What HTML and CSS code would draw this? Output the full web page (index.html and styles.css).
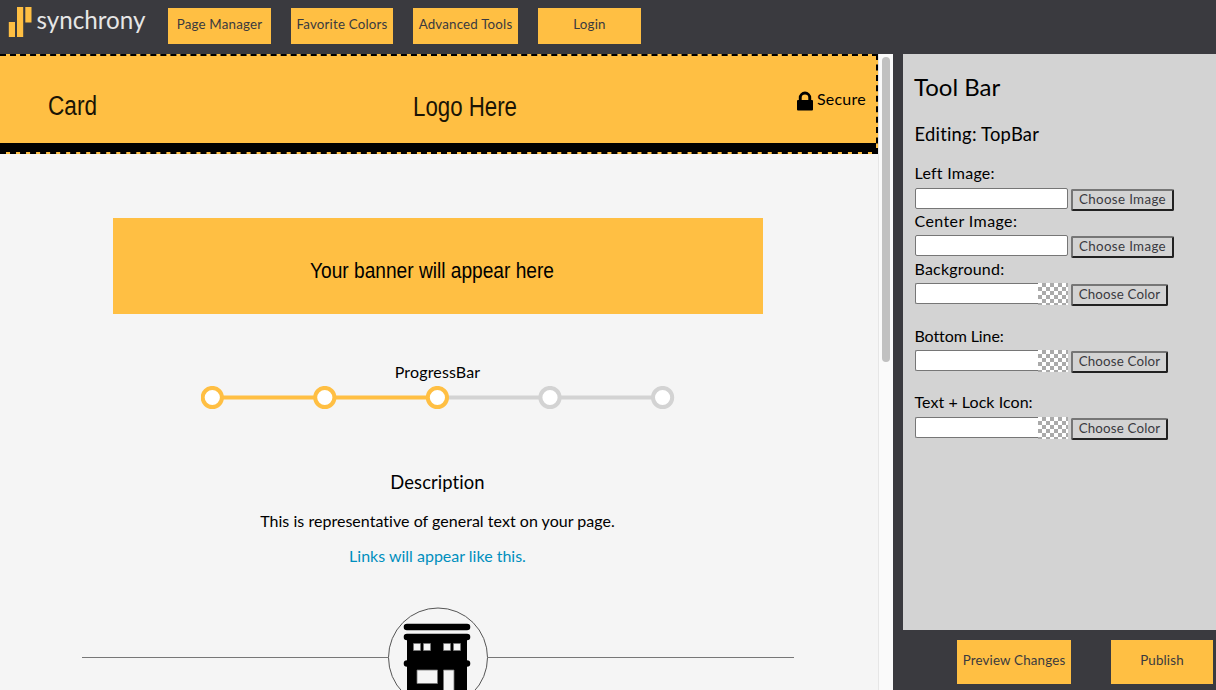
FILE: index.html
```html
<!DOCTYPE html>
<html lang="en">
<head>
<meta charset="utf-8">
<title>Synchrony Page Manager</title>
<link rel="stylesheet" href="styles.css">
</head>
<body>
<header class="site-header">
  <svg class="brand" width="168" height="54" viewBox="0 0 168 54">
    <g fill="#ffbf43"><rect x="8.8" y="22" width="6.2" height="15"/><rect x="17" y="7" width="6.2" height="30"/><rect x="25.3" y="7" width="6.2" height="15.5"/></g>
    <text class="brand-name" x="36.500" y="28.5" textLength="109" lengthAdjust="spacingAndGlyphs">synchrony</text>
  </svg>
  <nav class="nav">
    <button class="btn w103"><span>Page Manager</span></button>
    <button class="btn w102"><span>Favorite Colors</span></button>
    <button class="btn w105"><span>Advanced Tools</span></button>
    <button class="btn w103"><span>Login</span></button>
  </nav>
</header>
<div class="workspace">
  <main class="preview">
    <div class="page">
      <section class="topbar">
        <div class="topbar-main">
          <svg class="logo-art" width="796" height="87" viewBox="0 0 796 87">
            <text x="48" y="59" textLength="49" lengthAdjust="spacingAndGlyphs">Card</text>
            <text x="413" y="60" textLength="104" lengthAdjust="spacingAndGlyphs">Logo Here</text>
          </svg>
          <svg class="lock" width="18" height="20" viewBox="0 0 18 20"><path d="M2.8 9V6.8a6.2 6.2 0 0 1 12.4 0V9h.8q1 0 1 1v8.500q0 1-1 1H2q-1 0-1-1V10q0-1 1-1zM5.700 9h6.600V6.800a3.300 3.300 0 0 0-6.600 0z" fill-rule="evenodd"/></svg>
          <span class="secure">Secure</span>
        </div>
        <div class="topbar-line"></div>
      </section>
      <svg class="banner" width="650" height="96" viewBox="0 0 650 96">
        <text x="197" y="60" textLength="244" lengthAdjust="spacingAndGlyphs">Your banner will appear here</text>
      </svg>
      <div class="progress-label"><span>ProgressBar</span></div>
      <svg class="progress" width="474" height="24" viewBox="0 0 474 24">
        <path d="M237 11.500H462" stroke="#d3d3d3" stroke-width="4"/>
        <path d="M12 11.500H237" stroke="#ffbf43" stroke-width="4"/>
        <g fill="#fff" stroke-width="4"><g stroke="#ffbf43"><circle cx="11.300" cy="11.500" r="9.600"/><circle cx="123.800" cy="11.500" r="9.600"/><circle cx="236.400" cy="11.500" r="9.600"/></g><g stroke="#d3d3d3"><circle cx="349" cy="11.500" r="9.600"/><circle cx="461.600" cy="11.500" r="9.600"/></g></g>
      </svg>
      <h3 class="desc"><span>Description</span></h3>
      <p class="general"><span>This is representative of general text on your page.</span></p>
      <p class="links"><a>Links will appear like this.</a></p>
      <svg class="store" width="712" height="83" viewBox="82 607 712 83">
        <path d="M82 657.500H388M488 657.500H794" stroke="#777"/>
        <circle cx="438" cy="657.500" r="49.500" fill="none" stroke="#555"/>
        <path d="M407 637H467V690H407z"/>
        <path d="M407 627H467M407 637H467M407 663.500H467" stroke="#000" stroke-width="6.600" stroke-linecap="round"/>
        <g fill="#f5f5f5" stroke="#777" stroke-width=".8"><path d="M413.500 643.500h7v7h-7zM423.500 643.500h7v7h-7zM443.500 643.500h7v7h-7zM453.500 643.500h7v7h-7zM417 670h20.500v13.500H417zM443.500 670h10.500v22h-10.500z"/></g>
      </svg>
    </div>
    <div class="scroll"><div class="thumb"></div></div>
  </main>
  <aside class="side">
    <section class="tools">
      <h2><span>Tool Bar</span></h2>
      <h3><span>Editing: TopBar</span></h3>
      <div class="field"><label class="t-left">Left Image:</label><div class="row"><input><button class="choose wide"><span>Choose Image</span></button></div></div>
      <div class="field second"><label class="t-center">Center Image:</label><div class="row"><input><button class="choose wide"><span>Choose Image</span></button></div></div>
      <div class="field third"><label class="t-back">Background:</label><div class="row"><div class="color-input"><input><i></i></div><button class="choose"><span>Choose Color</span></button></div></div>
      <div class="field fourth"><label class="t-bot">Bottom Line:</label><div class="row"><div class="color-input"><input><i></i></div><button class="choose"><span>Choose Color</span></button></div></div>
      <div class="field fifth"><label>Text + Lock Icon:</label><div class="row"><div class="color-input"><input><i></i></div><button class="choose"><span>Choose Color</span></button></div></div>
    </section>
    <footer class="actions">
      <button class="btn w114"><span>Preview Changes</span></button>
      <button class="btn w102"><span>Publish</span></button>
    </footer>
  </aside>
</div>
</body>
</html>
```
FILE: styles.css
```css
* { box-sizing: border-box; }
body { margin: 0; width: 1216px; height: 690px; overflow: hidden; background: #3a3a3f; color: #000; font: 16px/20px Lato, sans-serif; font-variant-ligatures: none; }
h2, h3, p { margin: 0; font-weight: 400; }
svg { display: block; flex: none; }
span, label, a { white-space: nowrap; }
.site-header { display: flex; height: 54px; }
.brand-name { font: 400 24.500px Lato, sans-serif; fill: #e6e6e6; }
.nav { display: flex; gap: 20px; padding-top: 8px; }
.btn { height: 36px; padding: 0 0 4px; border: 0; border-radius: 0; background: #ffbf43; color: #3a3a3f; font: 13.333px/16px Lato, sans-serif; letter-spacing: .18px; text-align: center; }
.w102 { width: 102px; }
.w103 { width: 103px; }
.w105 { width: 105px; }
.w114 { width: 114px; }
.workspace { display: flex; height: 636px; }
.preview { display: flex; width: 893px; background: #f5f5f5; }
.page { width: 878px; display: flex; flex-direction: column; }
.topbar { height: 100px; border: 2px dashed #000; border-left: 0; background: #ffbf43; }
.topbar-main { display: flex; height: 87px; }
.logo-art text { font: 27px "Liberation Sans Narrow", "Liberation Sans", sans-serif; fill: #1a1405; }
.lock { margin-top: 35px; }
.secure { margin: 33px 0 0 3px; letter-spacing: .2px; }
.topbar-line { height: 9px; background: #000; }
.banner { margin: 64px 0 0 113px; background: #ffbf43; }
.banner text { font: 22px "Liberation Sans", sans-serif; }
.progress-label { margin-top: 48px; height: 25px; text-align: center; padding-right: 3px; letter-spacing: .15px; }
.progress { margin-left: 201px; }
.desc { margin-top: 60px; height: 24px; padding-right: 3px; text-align: center; font-size: 18.400px; line-height: 24px; letter-spacing: .1px; }
.general { margin-top: 17px; height: 20px; padding-right: 3px; text-align: center; letter-spacing: .03px; }
.links { margin-top: 15px; height: 20px; padding-right: 3px; text-align: center; color: #008fbe; }
.store { margin: 41px 0 0 82px; }
.scroll { width: 15px; padding: 3px 3px 0; border-left: 1px solid #e6e6e6; background: #fafafa; }
.thumb { width: 8px; height: 305px; border-radius: 4px; background: #c1c1c1; }
.side { width: 323px; padding-left: 10px; }
.tools { height: 576px; padding: 18px 0 0 12px; background: #d3d3d3; }
.tools h2 { height: 31px; font-size: 24px; line-height: 30px; text-indent: -1px; }
.tools h3 { margin-top: 19px; height: 24px; font-size: 18.400px; line-height: 24px; letter-spacing: .23px; text-indent: -.5px; }
.field { height: 48px; margin-top: 17px; }
.second, .third { margin-top: 0; }
.fourth { margin-top: 19px; }
.fifth { margin-top: 18px; }
.field label { display: block; height: 20px; line-height: 20px; text-indent: -.5px; letter-spacing: .05px; }
.row { display: flex; margin-top: 5px; gap: 3px; }
.second .row, .third .row, .fourth .row { margin-top: 4px; }
.field .t-center { letter-spacing: .4px; }
.field .t-left { letter-spacing: .25px; }
.field .t-back { letter-spacing: .2px; }
.field .t-bot { letter-spacing: -.1px; }
.row input { display: block; width: 153px; height: 21px; padding: 0; border: 1px solid #767676; border-radius: 2px; background: #fff; }
.color-input { display: flex; width: 153px; height: 22px; }
.color-input input { width: 123px; border-right: 0; border-radius: 2px 0 0 2px; }
.color-input i { width: 30px; background: repeating-conic-gradient(#aaa 0 25%, #fff 0 50%) 0 0 / 8px 8px; }
.choose { width: 97px; height: 22px; margin-top: 1px; padding: 0 0 4px; border: 2px solid; border-color: #767676 #212121 #212121 #767676; border-radius: 2px; background: #d3d3d3; color: #3a3a3f; font: 13.333px/16px Lato, sans-serif; letter-spacing: .18px; }
.wide { width: 103px; letter-spacing: .35px; }
.actions { display: flex; gap: 40px; padding: 10px 0 0 54px; }
.actions .btn { height: 44px; }
```
